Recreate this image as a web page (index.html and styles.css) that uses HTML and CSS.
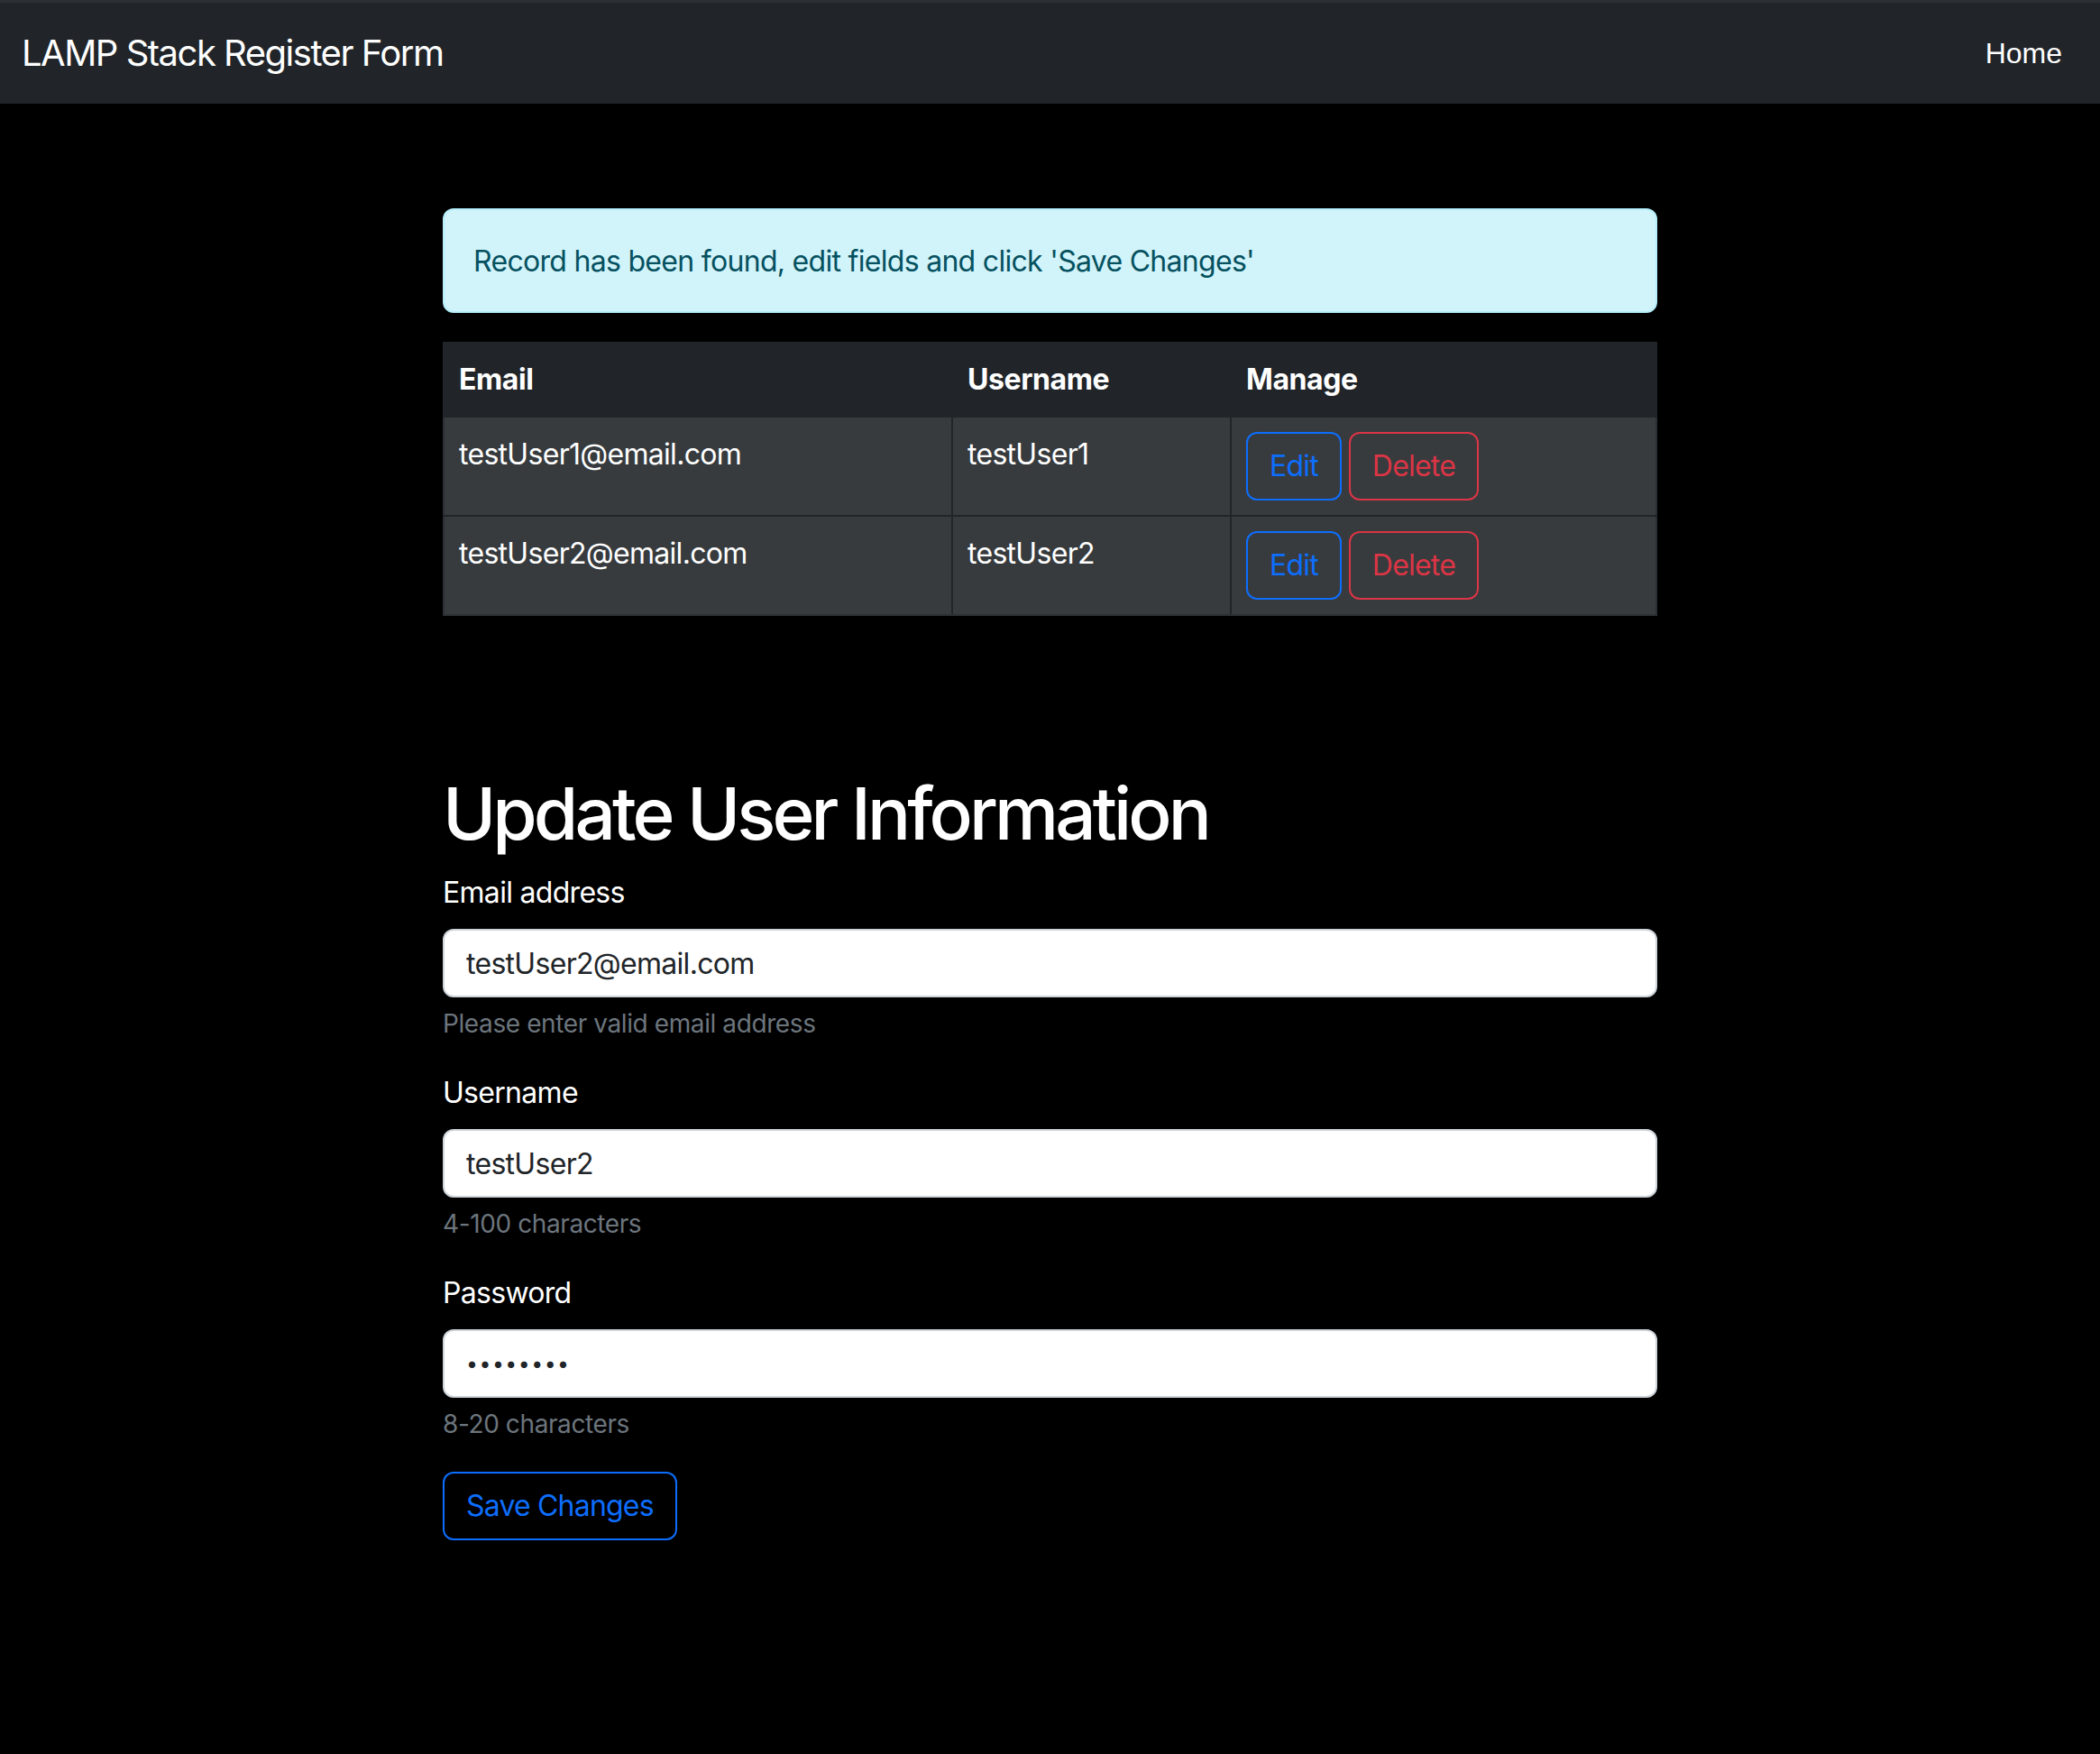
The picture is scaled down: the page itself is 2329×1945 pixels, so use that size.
FILE: index.html
```html
<!DOCTYPE html>
<html lang="en">
<head>
<meta charset="utf-8">
<title>LAMP Stack Register Form</title>
<link rel="stylesheet" href="styles.css">
</head>
<body>
<nav class="navbar">
  <a class="brand" href="#">LAMP Stack Register Form</a>
  <a class="nav-link" href="#">Home</a>
</nav>
<main class="container">
  <div class="alert">Record has been found, edit fields and click 'Save Changes'</div>
  <table class="table">
    <thead>
      <tr>
        <th class="col-email">Email</th>
        <th class="col-user">Username</th>
        <th class="col-manage">Manage</th>
      </tr>
    </thead>
    <tbody>
      <tr>
        <td>testUser1@email.com</td>
        <td>testUser1</td>
        <td><div class="actions"><button class="btn btn-outline-primary">Edit</button><button class="btn btn-outline-danger">Delete</button></div></td>
      </tr>
      <tr>
        <td>testUser2@email.com</td>
        <td>testUser2</td>
        <td><div class="actions"><button class="btn btn-outline-primary">Edit</button><button class="btn btn-outline-danger">Delete</button></div></td>
      </tr>
    </tbody>
  </table>
  <form class="form">
    <h1 class="title">Update User Information</h1>
    <div class="group">
      <label class="label" for="email">Email address</label>
      <input class="control" id="email" type="email" value="testUser2@email.com">
      <div class="form-text">Please enter valid email address</div>
    </div>
    <div class="group">
      <label class="label" for="username">Username</label>
      <input class="control" id="username" type="text" value="testUser2">
      <div class="form-text">4-100 characters</div>
    </div>
    <div class="group">
      <label class="label" for="password">Password</label>
      <input class="control password" id="password" type="text" value="••••••••">
      <div class="form-text">8-20 characters</div>
    </div>
    <button type="button" class="btn btn-outline-primary">Save Changes</button>
  </form>
</main>
</body>
</html>
```

FILE: styles.css
```css
* { box-sizing: border-box; }

body {
  margin: 0;
  background: #000;
  color: #fff;
  font-family: Inter, "Noto Sans", sans-serif;
  font-size: 32px;
  line-height: 48px;
  letter-spacing: -0.7px;
}

.navbar {
  height: 115px;
  border-top: 3px solid #2c2f33;
  background: #212529;
  display: flex;
  align-items: center;
  justify-content: space-between;
  padding: 0 42px 0 24px;
}

.brand {
  font-size: 40px;
  line-height: 60px;
  letter-spacing: -1.5px;
  color: #fff;
  text-decoration: none;
}

.nav-link {
  font-family: "Liberation Sans", Arial, sans-serif;
  font-size: 32px;
  letter-spacing: 0;
  color: #fff;
  text-decoration: none;
}

.container {
  width: 1347px;
  margin: 0 auto;
  padding-top: 116px;
  padding-bottom: 200px;
}

.alert {
  background: #d1f3fa;
  border: 2px solid #b6effb;
  color: #055160;
  border-radius: 12px;
  padding: 33px 32px 31px;
}

.table {
  width: 100%;
  margin-top: 32px;
  border-collapse: collapse;
}

.table th {
  background: #212529;
  text-align: left;
  font-weight: 700;
  letter-spacing: -0.4px;
  padding: 16px 16px;
  border: 2px solid #212529;
}

.table td {
  background: #373b3e;
  padding: 17px 16px 15px;
  vertical-align: top;
  border: 2px solid #212529;
}

.table td:first-child { border-left-color: #2c3034; }
.table td:last-child { border-right-color: #2c3034; padding-top: 16px; padding-bottom: 16px; }
.table tbody tr:last-child td { border-bottom-color: #2c3034; }

.col-email { width: 564px; }
.col-user { width: 309px; }

.actions {
  display: flex;
  gap: 8px;
}

.btn {
  font-family: inherit;
  font-size: 32px;
  line-height: 48px;
  letter-spacing: -0.8px;
  padding: 12px 24px;
  border: 2px solid;
  border-radius: 12px;
  background: transparent;
  cursor: pointer;
}

.btn-outline-primary {
  color: #0d6efd;
  border-color: #0d6efd;
}

.btn-outline-danger {
  color: #dc3545;
  border-color: #dc3545;
}

.title {
  margin: 171px 0 16px;
  font-size: 80px;
  line-height: 96px;
  font-weight: 500;
  letter-spacing: -3.9px;
}

.group {
  margin-bottom: 32px;
}

.label {
  display: block;
  margin-bottom: 16px;
}

.control {
  display: block;
  width: 100%;
  height: 76px;
  padding: 12px 24px;
  font-family: inherit;
  font-size: 32px;
  line-height: 48px;
  letter-spacing: -0.7px;
  color: #212529;
  background: #fff;
  border: 2px solid #ced4da;
  border-radius: 12px;
  outline: none;
}

.password {
  font-size: 23px;
  letter-spacing: 1.5px;
  padding-left: 24px;
}

.form-text {
  margin-top: 8px;
  font-size: 28px;
  line-height: 42px;
  letter-spacing: -0.4px;
  color: #6c757d;
}
```
